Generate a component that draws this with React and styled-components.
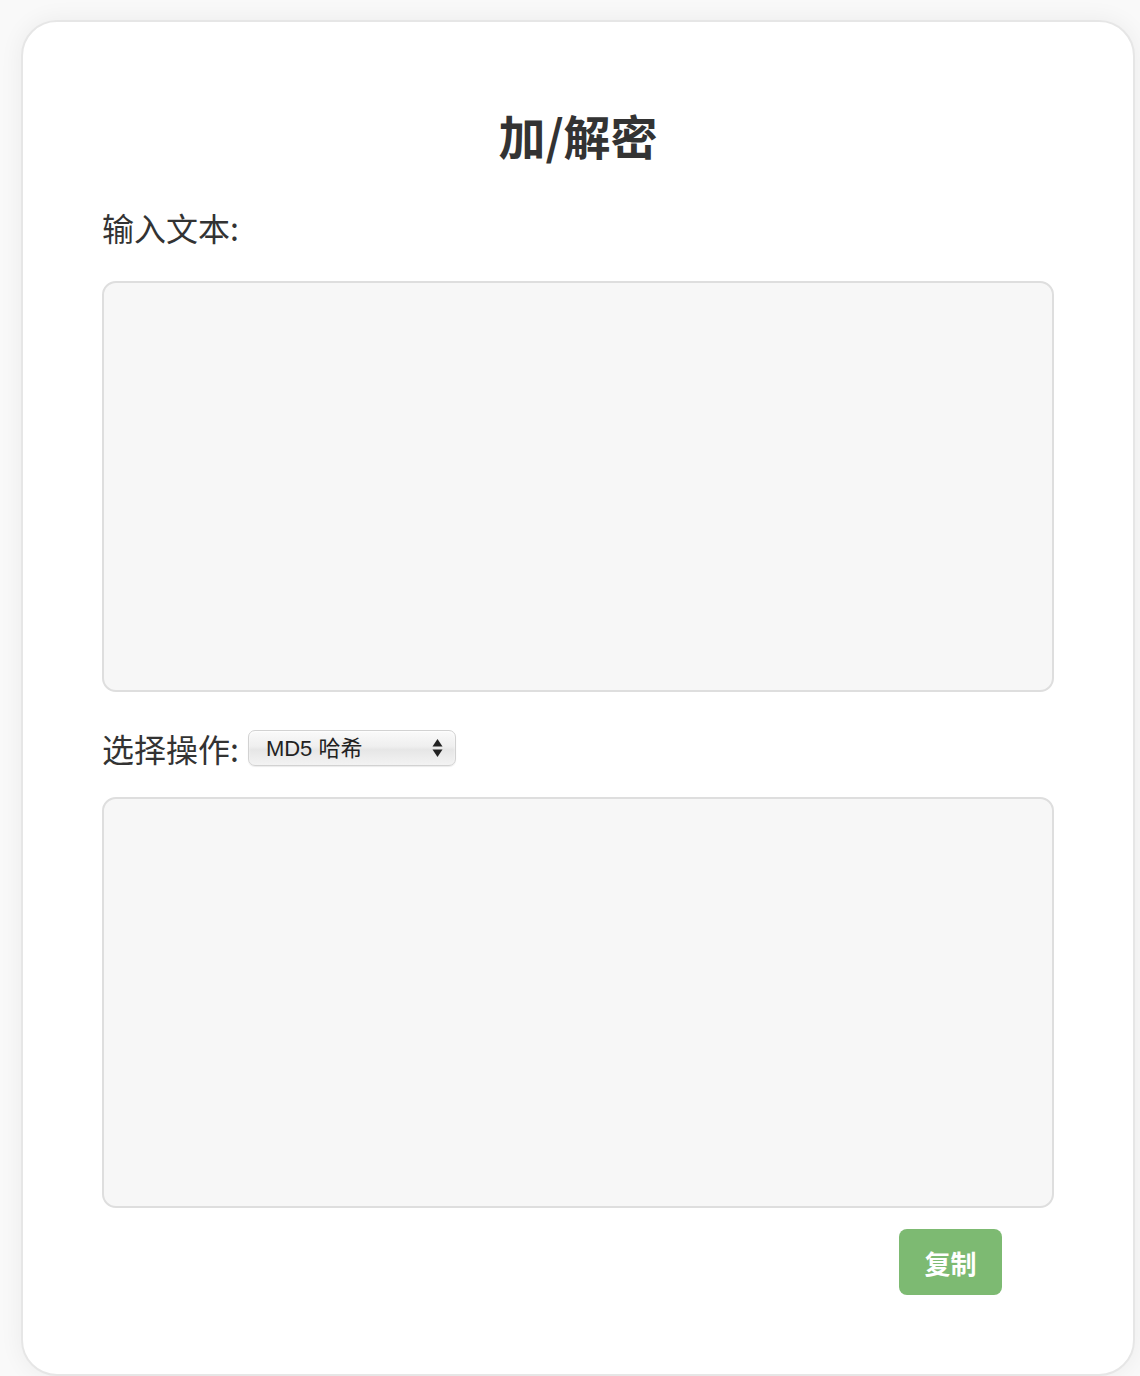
import React, { useState } from "react";
import styled, { createGlobalStyle } from "styled-components";

const GlobalStyle = createGlobalStyle`
  html, body {
    margin: 0;
    padding: 0;
    background: #f9f9f9;
  }
  body {
    font-family: "Noto Sans CJK SC", "Noto Sans", sans-serif;
    color: #333;
  }
`;

const Page = styled.div`
  padding: 20px 5px 0 21px;
  height: 1376px;
  box-sizing: border-box;
  overflow: hidden;
`;

const Card = styled.div`
  width: 1114px;
  height: 1356px;
  box-sizing: border-box;
  background: #fff;
  border: 2px solid #e6e6e6;
  border-radius: 36px;
  box-shadow: 0 0 24px rgba(0, 0, 0, 0.06);
  padding: 89px 79px 40px;
  display: flex;
  flex-direction: column;
`;

const Title = styled.h1`
  margin: 0 0 49px;
  text-align: center;
  font-size: 47px;
  line-height: 1;
  font-weight: 700;
  color: #333;
`;

const Label = styled.label`
  font-size: 32px;
  line-height: 40px;
  color: #333;
`;

const TextBox = styled.textarea`
  display: block;
  width: 952px;
  height: 411px;
  box-sizing: border-box;
  margin: ${(p) => p.$top || 0}px 0 0;
  background: #f7f7f7;
  border: 2px solid #dedede;
  border-radius: 14px;
  resize: none;
  outline: none;
  padding: 12px;
  font-size: 20px;
  font-family: inherit;
`;

const SelectRow = styled.div`
  display: flex;
  align-items: center;
  gap: 9px;
  margin-top: 36px;
`;

const SelectWrap = styled.div`
  position: relative;
  width: 208px;
  height: 36px;
`;

const Select = styled.select`
  appearance: none;
  width: 100%;
  height: 100%;
  box-sizing: border-box;
  border: 1px solid #d2d2d2;
  border-radius: 7px;
  background: linear-gradient(to bottom, #fafafa 0%, #efefef 45%, #e6e6e6 55%, #f3f3f3 100%);
  box-shadow: inset 0 1px 2px rgba(255, 255, 255, 0.9), 0 1px 1px rgba(0, 0, 0, 0.08);
  padding: 0 30px 0 17px;
  font-family: "Liberation Sans", "Noto Sans CJK SC", sans-serif;
  font-size: 22px;
  color: #222;
  outline: none;
`;

const Arrows = styled.svg`
  position: absolute;
  right: 13px;
  top: 8px;
  pointer-events: none;
`;

const ButtonRow = styled.div`
  display: flex;
  justify-content: flex-end;
  padding-right: 52px;
  margin-top: 21px;
`;

const CopyButton = styled.button`
  width: 103px;
  height: 66px;
  border: none;
  border-radius: 8px;
  background: #7dba72;
  color: #fff;
  font-family: inherit;
  font-size: 26px;
  font-weight: 700;
  cursor: pointer;
`;

export default function App() {
  const [input, setInput] = useState("");
  const [op, setOp] = useState("md5");

  return (
    <>
      <GlobalStyle />
      <Page>
        <Card>
          <Title>加/解密</Title>
          <Label>输入文本:</Label>
          <TextBox $top={34} value={input} onChange={(e) => setInput(e.target.value)} />
          <SelectRow>
            <Label>选择操作:</Label>
            <SelectWrap>
              <Select value={op} onChange={(e) => setOp(e.target.value)}>
                <option value="md5">MD5 哈希</option>
                <option value="base64e">Base64 编码</option>
                <option value="base64d">Base64 解码</option>
              </Select>
              <Arrows width="11" height="20" viewBox="0 0 11 20">
                <path d="M5.5 1 L10.5 8.5 H0.5 Z" fill="#222" />
                <path d="M5.5 19 L10.5 11.5 H0.5 Z" fill="#222" />
              </Arrows>
            </SelectWrap>
          </SelectRow>
          <TextBox $top={29} readOnly />
          <ButtonRow>
            <CopyButton>复制</CopyButton>
          </ButtonRow>
        </Card>
      </Page>
    </>
  );
}
